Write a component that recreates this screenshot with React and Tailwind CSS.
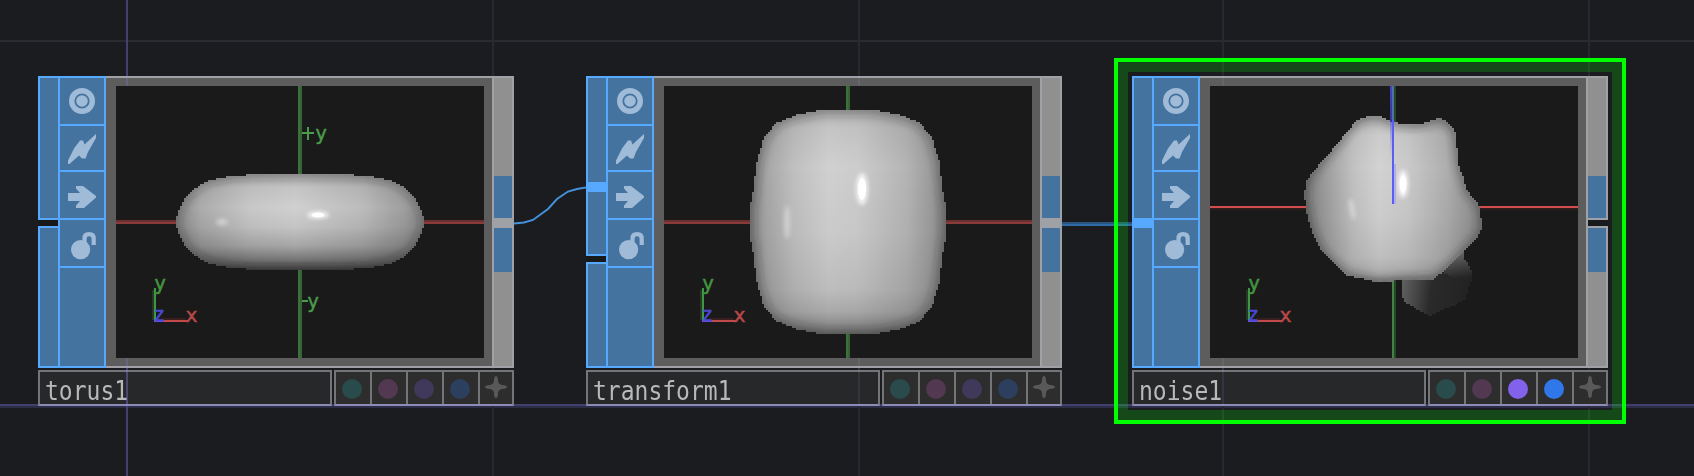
import React from "react";

// Builds a path whose outline is stepped on a two pixel raster.
function steppedPath(points) {
  const ys = points.map((p) => p[1]);
  const top = Math.round(Math.min(...ys) / 2) * 2;
  const bottom = Math.round(Math.max(...ys) / 2) * 2;
  let d = "";
  for (let y = top; y < bottom; y += 2) {
    const c = y + 1;
    const xs = [];
    points.forEach(([x1, y1], i) => {
      const [x2, y2] = points[(i + 1) % points.length];
      if ((y1 <= c && y2 > c) || (y2 <= c && y1 > c)) {
        xs.push(x1 + ((c - y1) / (y2 - y1)) * (x2 - x1));
      }
    });
    xs.sort((a, b) => a - b);
    for (let i = 0; i + 1 < xs.length; i += 2) {
      const a = Math.round(xs[i] / 2) * 2;
      const b = Math.round(xs[i + 1] / 2) * 2;
      if (b > a) d += `M${a} ${y}H${b}V${y + 2}H${a}Z`;
    }
  }
  return d;
}

// Mirrors a quarter outline (centre-top to right) around a centre point.
function mirrored(quarter, cx, cy) {
  const q = quarter;
  const r = [...quarter].reverse();
  return [
    ...q.map(([x, y]) => [cx + x, cy - y]),
    ...r.map(([x, y]) => [cx + x, cy + y]),
    ...q.map(([x, y]) => [cx - x, cy + y]),
    ...r.map(([x, y]) => [cx - x, cy - y]),
  ];
}

const TORUS = mirrored(
  [[0, 48], [50, 48], [54, 47], [72, 46.5], [74, 45], [90, 42], [103, 35], [114, 25], [118, 19], [122, 9], [124, 4]],
  184,
  136
);
const BLOCK = mirrored(
  [[0, 112], [24, 112], [32, 111], [52, 107], [72, 99], [76, 94], [84, 85], [91, 61], [94, 39], [96, 21], [98, 20], [98, 0]],
  184,
  136
);
const local = (pts) => pts.map(([x, y]) => [85 + x / 3, 14 + y / 3]);
const BLOB = local([
  [28, 285], [35, 240], [75, 190], [120, 140], [165, 85], [185, 62], [205, 52], [230, 49], [258, 51], [285, 62],
  [300, 68], [345, 74], [385, 70], [415, 60], [430, 54], [445, 58], [465, 72], [480, 95], [487, 150], [492, 200],
  [505, 232], [513, 268], [540, 300], [555, 320], [556, 345], [561, 370], [556, 400], [530, 430], [505, 455],
  [480, 480], [445, 515], [415, 537], [300, 540], [290, 545], [230, 543], [200, 535], [150, 525], [125, 500],
  [80, 455], [65, 425], [45, 380], [35, 335],
]);
const FIN = local([
  [315, 530], [323, 560], [323, 595], [330, 607], [370, 630], [408, 648], [440, 630], [480, 615], [512, 597],
  [522, 560], [530, 540], [530, 515], [520, 495], [506, 470], [506, 450], [470, 470], [415, 520],
]);
const FIN_FOLD = local([[506, 450], [506, 470], [520, 495], [530, 515], [530, 530], [480, 534], [445, 518], [470, 480]]);

function Gizmo() {
  return (
    <g fontFamily="'DejaVu Sans Mono', monospace" fontSize="20" strokeWidth="0.5">
      <rect x="36" y="204" width="2" height="30" fill="#243826" />
      <rect x="38" y="202" width="2" height="32" fill="#419644" />
      <rect x="46" y="232" width="24" height="2" fill="#3a1e20" />
      <rect x="38" y="234" width="34" height="2" fill="#c04a4a" />
      <rect x="38" y="234" width="10" height="2" fill="#6c50d8" />
      <text x="38" y="204" fill="#43953f" stroke="#43953f">y</text>
      <text x="37.500" y="235" fill="#4a49d8" stroke="#4a49d8" fontSize="19">z</text>
      <text x="69.500" y="236" fill="#b84848" stroke="#b84848">x</text>
    </g>
  );
}

function Solid({ id, points, base, shade, rim, rimWidth, rimBlur, children }) {
  return (
    <g>
      <defs>
        <clipPath id={`${id}-clip`}>
          <path d={steppedPath(points)} shapeRendering="crispEdges" />
        </clipPath>
        <linearGradient id={`${id}-base`}>
          {base.map(([o, c]) => (
            <stop key={o} offset={o} stopColor={c} />
          ))}
        </linearGradient>
        <linearGradient id={`${id}-shade`} x1="0" y1="0" x2="0" y2="1">
          {shade.map(([o, a]) => (
            <stop key={o} offset={o} stopColor="#101010" stopOpacity={a} />
          ))}
        </linearGradient>
        <filter id={`${id}-rim`} x="-20%" y="-20%" width="140%" height="140%">
          <feGaussianBlur stdDeviation={rimBlur} />
        </filter>
        <filter id={`${id}-glow`} x="-100%" y="-100%" width="300%" height="300%">
          <feGaussianBlur stdDeviation="2" />
        </filter>
      </defs>
      <g clipPath={`url(#${id}-clip)`}>
        <path d={steppedPath(points)} fill={`url(#${id}-base)`} shapeRendering="crispEdges" />
        <path d={steppedPath(points)} fill={`url(#${id}-shade)`} shapeRendering="crispEdges" />
        <polygon
          points={points.map((p) => p.join(",")).join(" ")}
          fill="none"
          stroke="#262626"
          strokeOpacity={rim}
          strokeWidth={rimWidth}
          filter={`url(#${id}-rim)`}
        />
        {children}
      </g>
    </g>
  );
}

function CentredAxes() {
  return (
    <g shapeRendering="crispEdges">
      <rect x="0" y="134" width="368" height="2" fill="#6b2f30" />
      <rect x="0" y="136" width="368" height="2" fill="#893b3b" />
      <rect x="182" y="0" width="4" height="272" fill="#376337" />
      <rect x="182" y="0" width="2" height="272" fill="#3c703c" />
    </g>
  );
}

function TorusView() {
  return (
    <>
      <CentredAxes />
      <Solid
        id="torus"
        points={TORUS}
        base={[[0, "#888888"], [0.1, "#acacac"], [0.3, "#c8c8c8"], [0.48, "#d0d0d0"], [0.75, "#bcbcbc"], [0.92, "#9e9e9e"], [1, "#868686"]]}
        shade={[[0, 0.22], [0.14, 0.06], [0.35, 0], [0.55, 0.06], [0.75, 0.22], [0.9, 0.48], [1, 0.76]]}
        rim={0.38}
        rimWidth={6}
        rimBlur={4}
      >
        <ellipse cx="106" cy="136" rx="6" ry="3" fill="#ffffff" opacity="0.45" filter="url(#torus-glow)" />
        <ellipse cx="202" cy="129" rx="11" ry="3.500" fill="#ffffff" opacity="0.85" filter="url(#torus-glow)" />
        <ellipse cx="202" cy="129" rx="6" ry="2.500" fill="#ffffff" />
      </Solid>
      <g fontFamily="'DejaVu Sans Mono', monospace" fontSize="20" fill="#4a9c4a" stroke="#4a9c4a" strokeWidth="0.4">
        <path d="M186 47H198M192 41V54" strokeWidth="2" />
        <text x="199" y="54">y</text>
        <path d="M186 215H192" strokeWidth="2" />
        <text x="191" y="222">y</text>
      </g>
    </>
  );
}

function TransformView() {
  return (
    <>
      <CentredAxes />
      <Solid
        id="block"
        points={BLOCK}
        base={[[0, "#858585"], [0.08, "#a5a5a5"], [0.22, "#bfbfbf"], [0.4, "#d0d0d0"], [0.55, "#cccccc"], [0.8, "#b4b4b4"], [0.93, "#9a9a9a"], [1, "#808080"]]}
        shade={[[0, 0.18], [0.08, 0.06], [0.25, 0], [0.55, 0.03], [0.8, 0.1], [0.9, 0.2], [0.96, 0.36], [1, 0.52]]}
        rim={0.42}
        rimWidth={7}
        rimBlur={5}
      >
        <ellipse cx="123" cy="136" rx="3" ry="17" fill="#ffffff" opacity="0.38" filter="url(#block-glow)" />
        <ellipse cx="198" cy="103" rx="6" ry="16" fill="#ffffff" opacity="0.8" filter="url(#block-glow)" />
        <ellipse cx="198" cy="103" rx="4" ry="11" fill="#ffffff" />
      </Solid>
    </>
  );
}

function NoiseView() {
  return (
    <>
      <defs>
        <linearGradient id="fin" x1="0" y1="0" x2="1" y2="0.12">
          <stop offset="0" stopColor="#6a6a6a" />
          <stop offset="0.3" stopColor="#464646" />
          <stop offset="0.5" stopColor="#2a2a2a" />
          <stop offset="1" stopColor="#232323" />
        </linearGradient>
        <linearGradient id="fin-fold" x1="0.3" y1="0" x2="0.5" y2="1">
          <stop offset="0" stopColor="#747474" />
          <stop offset="0.5" stopColor="#4a4a4a" />
          <stop offset="1" stopColor="#262626" />
        </linearGradient>
        <linearGradient id="z-axis" x1="0" y1="0" x2="0" y2="1">
          <stop offset="0" stopColor="#4343c8" />
          <stop offset="0.3" stopColor="#4343c8" stopOpacity="0.7" />
          <stop offset="0.31" stopColor="#6a6af0" stopOpacity="0.6" />
          <stop offset="0.62" stopColor="#8a8af0" stopOpacity="0" />
        </linearGradient>
      </defs>
      <g shapeRendering="crispEdges">
        <rect x="0" y="120" width="368" height="2" fill="#d24e4e" />
        <rect x="0" y="122" width="368" height="2" fill="#2c1c1c" />
        <rect x="182" y="0" width="2" height="272" fill="#418341" />
        <rect x="184" y="0" width="2" height="272" fill="#29462a" />
        <path d={steppedPath(FIN)} fill="url(#fin)" />
        <path d={steppedPath(FIN_FOLD)} fill="url(#fin-fold)" />
      </g>
      <Solid
        id="blob"
        points={BLOB}
        base={[[0, "#7c7c7c"], [0.12, "#9c9c9c"], [0.28, "#c2c2c2"], [0.42, "#d2d2d2"], [0.58, "#cacaca"], [0.8, "#aeaeae"], [1, "#888888"]]}
        shade={[[0, 0.18], [0.12, 0.03], [0.3, 0], [0.6, 0.03], [0.85, 0.1], [0.95, 0.2], [1, 0.35]]}
        rim={0.52}
        rimWidth={6}
        rimBlur={4}
      >
        <ellipse cx="142" cy="123" rx="2.500" ry="11" fill="#ffffff" opacity="0.4" transform="rotate(-10 142 123)" filter="url(#blob-glow)" />
        <ellipse cx="193" cy="98" rx="5" ry="14" fill="#ffffff" opacity="0.85" filter="url(#blob-glow)" />
        <ellipse cx="193" cy="98" rx="3.500" ry="9" fill="#ffffff" />
      </Solid>
      <g shapeRendering="crispEdges">
        <rect x="180" y="0" width="2" height="118" fill="url(#z-axis)" />
        <rect x="182" y="0" width="2" height="34" fill="#4b75a0" />
        <rect x="182" y="34" width="2" height="84" fill="#5c5cf6" />
        <rect x="184" y="78" width="2" height="40" fill="#a5a5e8" opacity="0.75" />
      </g>
    </>
  );
}

const FLAGS = [
  {
    name: "viewer",
    cell: "h-12",
    icon: (
      <>
        <circle cx="22" cy="23" r="10.3" fill="none" stroke="currentColor" strokeWidth="5.4" />
        <circle cx="22" cy="23" r="5.8" fill="currentColor" />
      </>
    ),
  },
  {
    name: "bypass",
    cell: "h-[46px]",
    icon: <path fill="currentColor" d="M36 8L24.500 18.500L23 14.500H20L14 22.500L8 34.500V38H9.500L19 29.500L22 32.500H25.500L28 26L36 12Z" />,
  },
  {
    name: "pass",
    cell: "h-12",
    icon: <path fill="currentColor" d="M16 14H23L36 24L36 25.500L24 36H16V33.500L20 29H8V21H20L16 16.500Z" />,
  },
  {
    name: "lock",
    cell: "h-12",
    icon: (
      <>
        <circle cx="20.6" cy="29.6" r="9.6" fill="currentColor" />
        <path fill="none" stroke="currentColor" strokeWidth="4.2" d="M24.500 24V18.500Q24.500 14.200 29 14.200Q33.700 14.200 33.700 18.500V25" />
      </>
    ),
  },
];

const DIM = ["bg-[#294b4b]", "bg-[#523850]", "bg-[#41395b]", "bg-[#2c3f5e]"];
const LIT = ["bg-[#294b4b]", "bg-[#523850]", "bg-[#8262ea]", "bg-[#3078ea]"];

function InputColumn({ kind }) {
  const part = "border-[#57a9ff] border-l-2 bg-[#4573a0]";
  if (kind === "open") {
    return (
      <div className="flex w-5 flex-col">
        <div className={`${part} h-36 border-y-2`} />
        <div className="h-1.5 bg-[#191919]" />
        <div className={`${part} flex-1 border-y-2`} />
      </div>
    );
  }
  if (kind === "split") {
    return (
      <div className="flex w-5 flex-col">
        <div className={`${part} h-[180px] border-y-2 pt-[104px]`}>
          <div className="h-2.5 bg-[#57a9ff]" />
        </div>
        <div className="h-1.5 bg-[#191919]" />
        <div className={`${part} flex-1 border-y-2`} />
      </div>
    );
  }
  return (
    <div className={`${part} w-5 border-y-2 pt-[140px]`}>
      <div className="h-2.5 bg-[#57a9ff]" />
    </div>
  );
}

function OutputColumn({ linked }) {
  return (
    <div className="flex w-5 flex-col">
      <div className="flex h-[142px] flex-col justify-end border-t-2 border-r-2 border-[#a0a1a6] bg-[#909090]">
        <div className="h-[42px] bg-[#4573a0]" />
      </div>
      {linked ? (
        <div className="h-2.5 bg-[#a0a1a6]" />
      ) : (
        <div className="h-2.5 border-y-2 border-[#a0a1a6] bg-[#191a1d]" />
      )}
      <div className="flex-1 border-r-2 border-b-2 border-[#a0a1a6] bg-[#909090]">
        <div className="h-11 bg-[#4573a0]" />
      </div>
    </div>
  );
}

function Node({ name, input, linked, dots, children }) {
  return (
    <div className="flex w-[476px] flex-col gap-0.5">
      <div className="flex h-[292px]">
        <InputColumn kind={input} />
        <div className="w-12 border-2 border-[#57a9ff] bg-[#4573a0]">
          {FLAGS.map((f) => (
            <div key={f.name} className={`${f.cell} border-b-2 border-[#57a9ff] text-[#9fbbd8]`}>
              <svg className="block" width="44" height="44" viewBox="0 0 44 44">
                {f.icon}
              </svg>
            </div>
          ))}
        </div>
        <div className="w-[388px] border-y-2 border-r-2 border-[#a0a1a6] bg-[#5d5d5d] pt-2 pl-2.5">
          <svg className="relative z-20 block bg-[#1a1a1a]" width="368" height="272" viewBox="0 0 368 272">
            {children}
            <Gizmo />
          </svg>
        </div>
        <OutputColumn linked={linked} />
      </div>
      <div className="flex h-9 gap-0.5">
        <div className="w-[294px] border-2 border-[#747579] border-b-[#8d8cb6] bg-[#27282a] pl-[5px]">
          <span className="inline-block origin-left scale-x-[0.885] font-['DejaVu_Sans_Mono',monospace] text-[26px] leading-[38px] whitespace-nowrap text-[#b9b9b9]">
            {name}
          </span>
        </div>
        <div className="flex flex-1 border-2 border-[#747579] border-b-[#8d8cb6] bg-[#2d2d2d]">
          {dots.map((c) => (
            <div key={c} className="flex w-9 items-center justify-center border-r-2 border-[#747579] pt-0.5 pr-0.5">
              <div className={`h-5 w-5 rounded-full ${c}`} />
            </div>
          ))}
          <div className="flex flex-1 items-center justify-center pb-0.5">
            <svg width="22" height="22" viewBox="0 0 22 22">
              <path fill="#595959" d="M11 0Q13 0 13 5Q13.500 8.500 17 9Q22 9.500 22 11Q22 12.500 17 13Q13.500 13.500 13 17Q13 22 11 22Q9 22 9 17Q8.500 13.500 5 13Q0 12.500 0 11Q0 9.500 5 9Q8.500 8.500 9 5Q9 0 11 0Z" />
            </svg>
          </div>
        </div>
      </div>
    </div>
  );
}

export default function App() {
  return (
    <div className="relative h-[476px] w-[1694px] overflow-hidden bg-[#1b1c20]">
      <div className="absolute top-10 left-0 h-0.5 w-full bg-[#2a2a31]" />
      <div className="absolute top-[404px] left-0 h-0.5 w-full bg-[#41406e]" />
      <div className="absolute top-[406px] left-0 h-0.5 w-full bg-[#2d2c46]" />
      <div className="absolute top-0 left-[126px] h-full w-0.5 bg-[#41406e]" />
      <div className="absolute top-0 left-[492px] h-full w-0.5 bg-[#282830]" />
      <div className="absolute top-0 left-[858px] h-full w-0.5 bg-[#282830]" />
      <div className="absolute top-0 left-[1222px] h-full w-0.5 bg-[#282830]" />
      <div className="absolute top-0 left-[1588px] h-full w-0.5 bg-[#282830]" />

      <svg className="absolute top-0 left-0" width="1694" height="476" viewBox="0 0 1694 476" fill="none">
        <path d="M514 223.500L524 222.500L533 220L548 209L557 199L568 191.500L577 189L586 187.500" stroke="#4592dc" strokeWidth="1.900" />
        <path d="M1062 223H1132" stroke="#28547f" strokeWidth="2" />
        <path d="M1062 225H1132" stroke="#316ba6" strokeWidth="2" />
      </svg>

      <div className="absolute top-[58px] left-[1114px] h-[366px] w-[512px] border-4 border-[#00ff00]">
        <div className="h-full w-full border-10 border-[#00ff00]/20" />
      </div>

      <div className="absolute top-[76px] left-[38px]">
        <Node name="torus1" input="open" linked dots={DIM}>
          <TorusView />
        </Node>
      </div>
      <div className="absolute top-[76px] left-[586px]">
        <Node name="transform1" input="split" linked dots={DIM}>
          <TransformView />
        </Node>
      </div>
      <div className="absolute top-[76px] left-[1132px]">
        <Node name="noise1" input="wired" linked={false} dots={LIT}>
          <NoiseView />
        </Node>
      </div>

      <div className="absolute top-[76px] left-[126px] z-10 h-[292px] w-0.5 bg-[#8f85ff]/20" />
      <div className="absolute top-[370px] left-[126px] z-10 h-9 w-0.5 bg-[#8f85ff]/35" />
      <div className="absolute top-[76px] left-[858px] z-10 h-[330px] w-0.5 bg-[#b0b0ff]/10" />
      <div className="absolute top-[76px] left-[1222px] z-10 h-[330px] w-0.5 bg-[#b0b0ff]/10" />
    </div>
  );
}
